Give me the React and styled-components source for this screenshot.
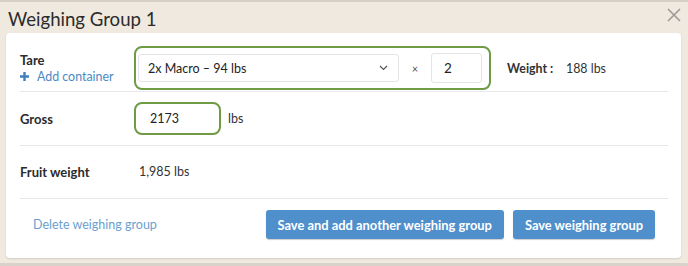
import React from 'react'
import styled, { createGlobalStyle } from 'styled-components'

const GlobalStyle = createGlobalStyle`
    html, body {
        margin: 0;
        padding: 0;
        background: #efe9e0;
    }
    body {
        font-family: Lato, "Open Sans", Arial, sans-serif;
        color: #333;
    }
`

const Modal = styled.div`
    width: 688px;
    height: 266px;
    box-sizing: border-box;
    background: #efe9e0;
    border-top: 2px solid #d6d0c8;
    border-bottom: 3px solid #d8d2ca;
    padding: 0 7px 0 6px;
    display: flex;
    flex-direction: column;
`

const Header = styled.div`
    display: flex;
    align-items: center;
    justify-content: space-between;
    height: 31px;
    padding-left: 2px;
`

const Title = styled.h1`
    margin: 2px 0 0;
    font-size: 18.6px;
    font-weight: 400;
    color: #2b2b2b;
`

const Close = styled.button`
    border: none;
    background: none;
    padding: 0;
    width: 20px;
    height: 20px;
    margin-top: -6px;
    margin-right: -3px;
    cursor: pointer;
    display: flex;
    align-items: center;
    justify-content: center;
`

const Panel = styled.div`
    background: #fff;
    border-radius: 4px;
    box-shadow: 0 1px 2px rgba(0, 0, 0, 0.12);
    padding: 0 13px 0 14px;
    height: 225px;
    box-sizing: border-box;
`

const Row = styled.div`
    display: grid;
    grid-template-columns: 114px 1fr;
    align-items: center;
    border-bottom: 1px solid #e8e8ec;
    padding: ${props => props.pad || '0'};
    height: ${props => props.h}px;
    box-sizing: border-box;
    font-size: 12.5px;
`

const Label = styled.div`
    font-weight: 700;
    font-size: 13px;
    color: #2b2b2b;
`

const AddLink = styled.a`
    display: flex;
    align-items: center;
    gap: 8px;
    margin-top: 1px;
    font-size: 12.4px;
    color: #4b8ac4;
    cursor: pointer;
`

const Line = styled.div`
    display: flex;
    align-items: center;
`

const Highlight = styled.div`
    display: flex;
    align-items: center;
    border: 2px solid #6f9b45;
    border-radius: 8px;
    padding: 3px 3px 3px 2px;
    width: 348px;
    height: 34px;
    box-sizing: content-box;
`

const Select = styled.div`
    width: 261px;
    height: 28px;
    box-sizing: border-box;
    border: 1px solid #e4e4e8;
    border-radius: 3px;
    display: flex;
    align-items: center;
    justify-content: space-between;
    padding: 0 10px 0 9px;
    font-size: 12.5px;
    color: #222;
`

const Times = styled.span`
    width: 32px;
    text-align: center;
    font-size: 11px;
    color: #555;
`

const Qty = styled.div`
    width: 51px;
    height: 30px;
    box-sizing: border-box;
    border: 1px solid #e4e4e8;
    border-radius: 3px;
    display: flex;
    align-items: center;
    padding-left: 12px;
    font-size: 13.5px;
    color: #222;
`

const Weight = styled.div`
    margin-left: 16px;
    display: flex;
    align-items: center;
    font-size: 12.4px;
`

const WeightLabel = styled.span`
    font-weight: 700;
    width: 59px;
`

const GrossInput = styled.div`
    width: 87px;
    height: 33px;
    box-sizing: border-box;
    border: 2px solid #6f9b45;
    border-radius: 8px;
    display: flex;
    align-items: center;
    padding-left: 14px;
    font-size: 12.5px;
    color: #222;
`

const Unit = styled.span`
    margin-left: 7px;
    font-size: 12.5px;
    color: #333;
`

const Value = styled.span`
    padding-left: 5px;
    margin-top: -2px;
    font-size: 12.5px;
    color: #333;
`

const Footer = styled.div`
    display: flex;
    align-items: center;
    padding: 11px 13px 19px 13px;
`

const DeleteLink = styled.a`
    font-size: 12.5px;
    color: #6aa0cf;
    cursor: pointer;
    margin-right: auto;
`

const Button = styled.button`
    height: 29px;
    border: none;
    border-radius: 3px;
    background: #4f8fcb;
    box-shadow: 0 1px 1px rgba(0, 0, 0, 0.2);
    color: #fff;
    font-family: Lato, Arial, sans-serif;
    font-weight: 700;
    font-size: 12.9px;
    padding: 0 ${props => props.px}px;
    margin-left: ${props => props.ml || 0}px;
    cursor: pointer;
`

const PlusIcon = () => (
    <svg width="9" height="9" viewBox="0 0 9 9">
        <path d="M4.5 0v9M0 4.5h9" stroke="#3f7fbe" strokeWidth="2.4" />
    </svg>
)

const Chevron = () => (
    <svg width="9" height="6" viewBox="0 0 9 6">
        <path d="M1 1l3.5 3.5L8 1" fill="none" stroke="#555" strokeWidth="1.2" />
    </svg>
)

const CloseIcon = () => (
    <svg width="14" height="14" viewBox="0 0 14 14">
        <path d="M1 1l12 12M13 1L1 13" stroke="#9a9794" strokeWidth="1.5" />
    </svg>
)

const App = () => {
    return (
        <Modal>
            <GlobalStyle />
            <Header>
                <Title>Weighing Group 1</Title>
                <Close><CloseIcon /></Close>
            </Header>
            <Panel>
                <Row h={59} pad="13px 0 6px">
                    <div>
                        <Label>Tare</Label>
                        <AddLink><PlusIcon />Add container</AddLink>
                    </div>
                    <Line>
                        <Highlight>
                            <Select>
                                <span>2x Macro – 94 lbs</span>
                                <Chevron />
                            </Select>
                            <Times>×</Times>
                            <Qty>2</Qty>
                        </Highlight>
                        <Weight>
                            <WeightLabel>Weight :</WeightLabel>
                            <span>188 lbs</span>
                        </Weight>
                    </Line>
                </Row>
                <Row h={54}>
                    <Label>Gross</Label>
                    <Line>
                        <GrossInput>2173</GrossInput>
                        <Unit>lbs</Unit>
                    </Line>
                </Row>
                <Row h={53}>
                    <Label>Fruit weight</Label>
                    <Value>1,985 lbs</Value>
                </Row>
                <Footer>
                    <DeleteLink>Delete weighing group</DeleteLink>
                    <Button px={12}>Save and add another weighing group</Button>
                    <Button px={12} ml={9}>Save weighing group</Button>
                </Footer>
            </Panel>
        </Modal>
    )
}

export default App
